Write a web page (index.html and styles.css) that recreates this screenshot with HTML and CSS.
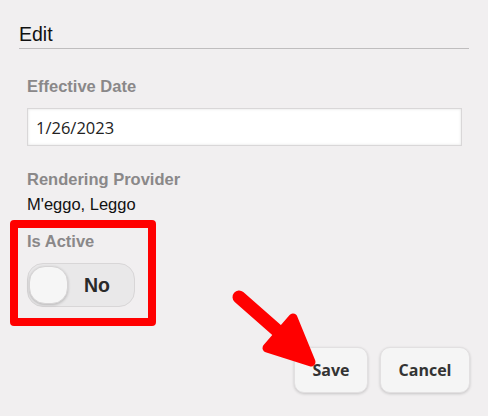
FILE: index.html
```html
<!DOCTYPE html>
<html>
    <head>
        <meta charset="utf-8">
        <title>Edit</title>
        <link rel="stylesheet" href="styles.css">
    </head>
    <body>
        <div class="dialog">
            <div class="title">Edit</div>
            <div class="fields">
                <div class="label">Effective Date</div>
                <input class="date" value="1/26/2023">
                <div class="label provider-label">Rendering Provider</div>
                <div class="value">M'eggo, Leggo</div>
                <div class="active">
                    <div class="label">Is Active</div>
                    <div class="toggle">
                        <span class="knob"></span>
                        <span class="toggle-text">No</span>
                    </div>
                </div>
            </div>
            <div class="buttons">
                <button class="btn save">Save</button>
                <button class="btn cancel">Cancel</button>
            </div>
        </div>
        <!-- annotation overlay -->
        <div class="highlight"></div>
        <svg class="arrow" width="488" height="416" viewBox="0 0 488 416">
            <path d="M239 297 L305 355" stroke="#ff0000" stroke-width="13" stroke-linecap="round" fill="none"/>
            <path d="M293 318 L311 362 L267 348 Z" fill="#ff0000" stroke="#ff0000" stroke-width="9" stroke-linejoin="round"/>
        </svg>
    </body>
</html>
```

FILE: styles.css
```css
*{
    margin: 0;
    padding: 0;
    box-sizing: border-box;
}
body{
    background: #f1eff0;
    font-family: "Liberation Sans", Arial, sans-serif;
    width: 488px;
    height: 416px;
    overflow: hidden;
    position: relative;
}
.dialog{
    padding: 23px 19px 0 19px;
}
.title{
    font-size: 19.5px;
    line-height: 22px;
    color: #111;
    padding-bottom: 3px;
    border-bottom: 1px solid #bfbdbe;
}
.fields{
    padding: 0 7px 0 8px;
}
.label{
    font-size: 16.5px;
    line-height: 19px;
    font-weight: bold;
    color: #8a8889;
}
.fields > .label:first-child{
    margin-top: 28px;
}
.date{
    display: block;
    width: 100%;
    height: 38px;
    margin-top: 12px;
    padding: 0 8px;
    border: 1px solid #d9d7d8;
    box-shadow: inset 0 0 3px rgba(0,0,0,0.12);
    background: #fff;
    font-family: "Open Sans", sans-serif;
    font-size: 16.5px;
    color: #222;
    outline: none;
}
.provider-label{
    margin-top: 24px;
}
.value{
    margin-top: 6px;
    font-size: 16.5px;
    line-height: 19px;
    color: #111;
}
.active{
    margin-top: 18px;
}
.toggle{
    margin-top: 12px;
    width: 108px;
    height: 44px;
    border-radius: 16px;
    background: #e9e8e9;
    border: 1px solid #d8d6d7;
    display: flex;
    align-items: center;
    padding-left: 1px;
}
.knob{
    width: 39px;
    height: 38px;
    border-radius: 16px;
    background: #f6f6f6;
    border: 1px solid #d6d4d5;
    box-shadow: 0 1px 3px rgba(0,0,0,0.22);
}
.toggle-text{
    flex: 1;
    text-align: center;
    padding-right: 8px;
    font-size: 19.5px;
    font-weight: bold;
    color: #2a2a2a;
}
.buttons{
    display: flex;
    justify-content: flex-end;
    gap: 12px;
    margin-top: 40px;
    padding-right: 0;
}
.btn{
    height: 46px;
    padding: 0;
    border: 1px solid #e2e0e1;
    border-radius: 10px;
    background: #f5f5f5;
    box-shadow: 0 1px 3px rgba(0,0,0,0.18);
    font-family: "Open Sans", sans-serif;
    font-weight: bold;
    font-size: 16px;
    color: #333;
}
.save{
    width: 74px;
}
.cancel{
    width: 90px;
    margin-right: -1px;
}
.highlight{
    position: absolute;
    left: 10px;
    top: 220px;
    width: 146px;
    height: 106px;
    border: 8px solid #ff0000;
    border-radius: 4px;
}
.arrow{
    position: absolute;
    left: 0;
    top: 0;
}
```
